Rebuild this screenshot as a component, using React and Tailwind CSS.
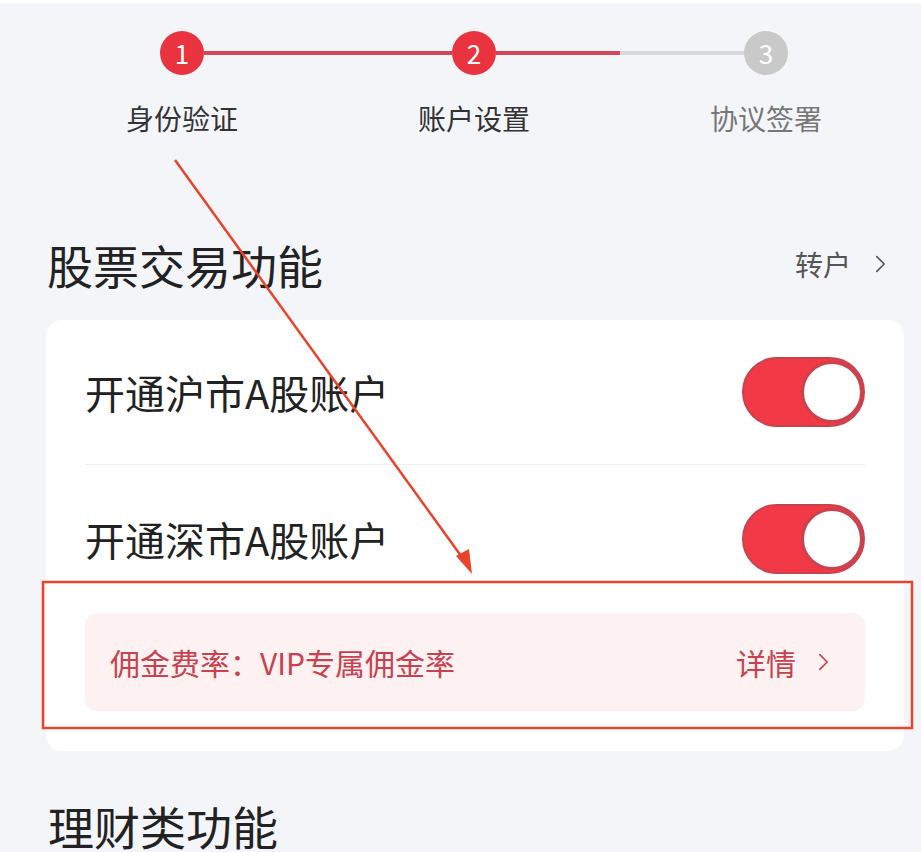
import React from "react";

const font = { fontFamily: '"Noto Sans CJK SC", "Noto Sans", sans-serif' };

const Chevron = ({ className }) => (
  <svg viewBox="0 0 12 20" className={className} fill="none" stroke="currentColor" strokeWidth="1.8" strokeLinecap="round" strokeLinejoin="round">
    <path d="M2 2l8 8-8 8" />
  </svg>
);

const Toggle = () => (
  <div className="w-[123px] h-[70px] rounded-full bg-[#f13a45] border-2 border-[#c8434f] flex items-center justify-end">
    <div className="w-[62px] h-[62px] rounded-full bg-white border-[3px] border-[#c8434f]" />
  </div>
);

const StepDot = ({ n, active }) => (
  <div
    className={`w-[44px] h-[44px] rounded-full flex items-center justify-center text-white text-[26px] leading-none shrink-0 ${
      active ? "bg-[#e9343f]" : "bg-[#c9c9c9]"
    }`}
  >
    {n}
  </div>
);

export default function App() {
  return (
    <div className="relative w-[921px] h-[852px] overflow-hidden bg-[#f4f5f9]" style={font}>
      <div className="h-[3px] bg-white" />

      {/* steps */}
      <div className="pt-[28px]">
        <div className="ml-[160px] w-[628px] flex items-center">
          <StepDot n="1" active />
          <div className="w-[248px] h-[4px] bg-[#d2475a]" />
          <StepDot n="2" active />
          <div className="w-[124px] h-[4px] bg-[#d2475a]" />
          <div className="w-[124px] h-[4px] bg-[#d8d8d8]" />
          <StepDot n="3" />
        </div>
        <div className="ml-[36px] flex mt-[23px] text-[28px] leading-[40px]">
          <div className="w-[292px] text-center text-[#333]">身份验证</div>
          <div className="w-[292px] text-center text-[#333]">账户设置</div>
          <div className="w-[292px] text-center text-[#777]">协议签署</div>
        </div>
      </div>

      {/* section header */}
      <div className="ml-[47px] mr-[35px] mt-[98px] flex items-center justify-between">
        <h2 className="text-[46px] leading-[56px] text-[#222]">股票交易功能</h2>
        <div className="flex items-center gap-[24px] text-[28px] text-[#555]">
          <span>转户</span>
          <Chevron className="w-[11px] h-[20px]" />
        </div>
      </div>

      {/* card */}
      <div className="ml-[46px] w-[858px] mt-[28px] bg-white rounded-2xl px-[39px] pb-[40px]">
        <div className="h-[145px] flex items-center justify-between border-b border-[#efefef]">
          <span className="text-[40px] text-[#222]">开通沪市A股账户</span>
          <Toggle />
        </div>
        <div className="h-[148px] flex items-center justify-between">
          <span className="text-[40px] text-[#222]">开通深市A股账户</span>
          <Toggle />
        </div>
        <div className="h-[98px] rounded-xl bg-[#fdf1f2] pl-[25px] pr-[36px] flex items-center justify-between text-[30px] text-[#c7424f]">
          <span>佣金费率：VIP专属佣金率</span>
          <div className="flex items-center gap-[22px]">
            <span>详情</span>
            <Chevron className="w-[11px] h-[20px]" />
          </div>
        </div>
      </div>

      <h2 className="ml-[48px] mt-[46px] text-[46px] leading-[56px] text-[#222]">理财类功能</h2>

      {/* annotation overlay */}
      <svg className="absolute inset-0 pointer-events-none" width="921" height="852" viewBox="0 0 921 852">
        <line x1="175" y1="160" x2="464" y2="560" stroke="#e8442c" strokeWidth="2.5" />
        <polygon points="472,574 456,556 469,549" fill="#e8442c" />
        <rect x="43" y="582" width="869" height="146" fill="none" stroke="#e8442c" strokeWidth="2.5" />
      </svg>
    </div>
  );
}
